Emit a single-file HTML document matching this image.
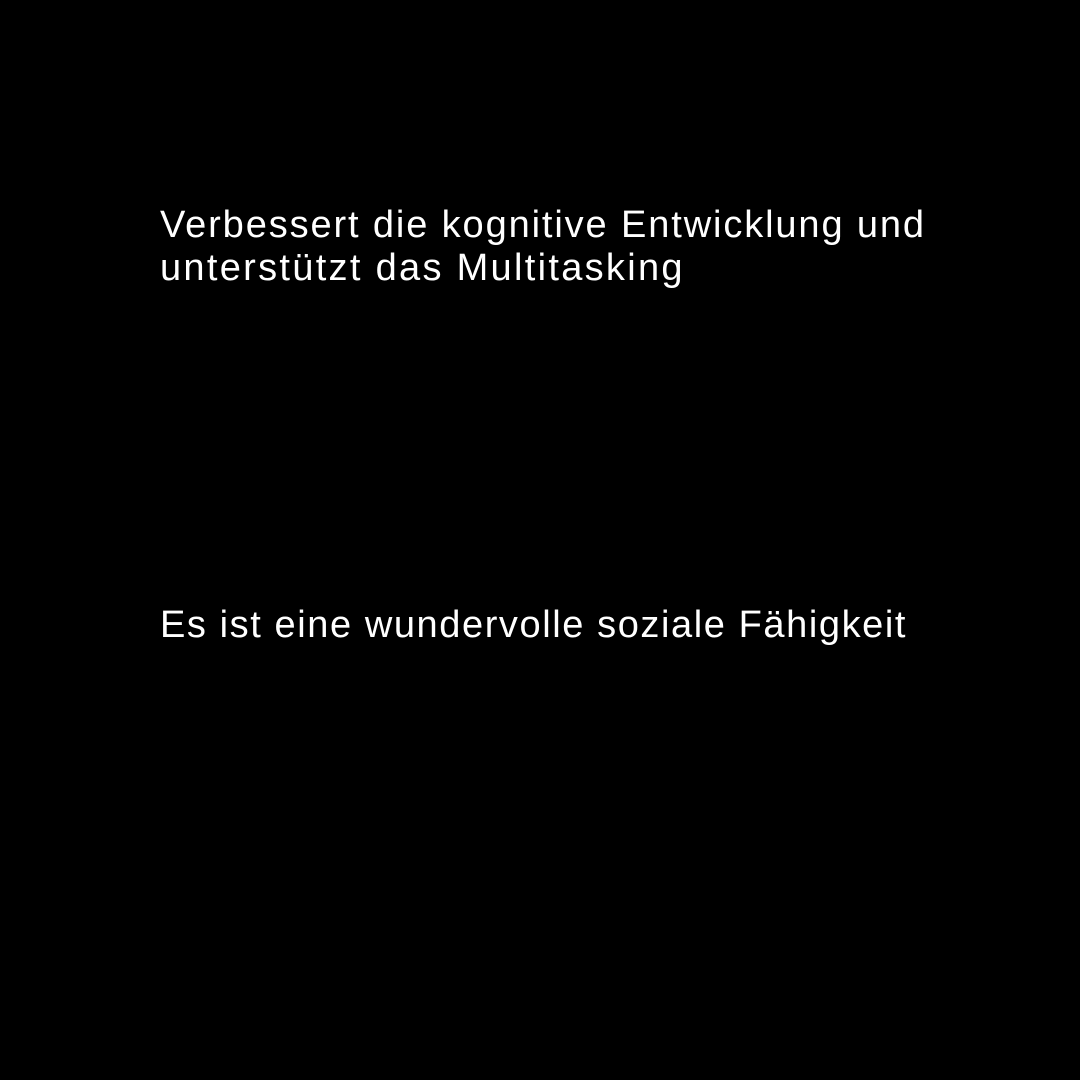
<!DOCTYPE html>
<html><head><meta charset="utf-8"><style>
html,body{margin:0;width:1080px;height:1080px;background:#000;overflow:hidden}
.t{position:absolute;left:160px;color:#fff;font-family:"Liberation Sans",sans-serif;font-size:38px;line-height:43px;white-space:nowrap;letter-spacing:1.8px}
</style></head><body>
<div class="t" style="top:204px"><span style="letter-spacing:1.88px">Verbessert die kognitive Entwicklung und</span><br><span style="letter-spacing:2.3px">unterstützt das Multitasking</span></div>
<div class="t" style="top:604px;letter-spacing:1.58px">Es ist eine wundervolle soziale Fähigkeit</div>
</body></html>
